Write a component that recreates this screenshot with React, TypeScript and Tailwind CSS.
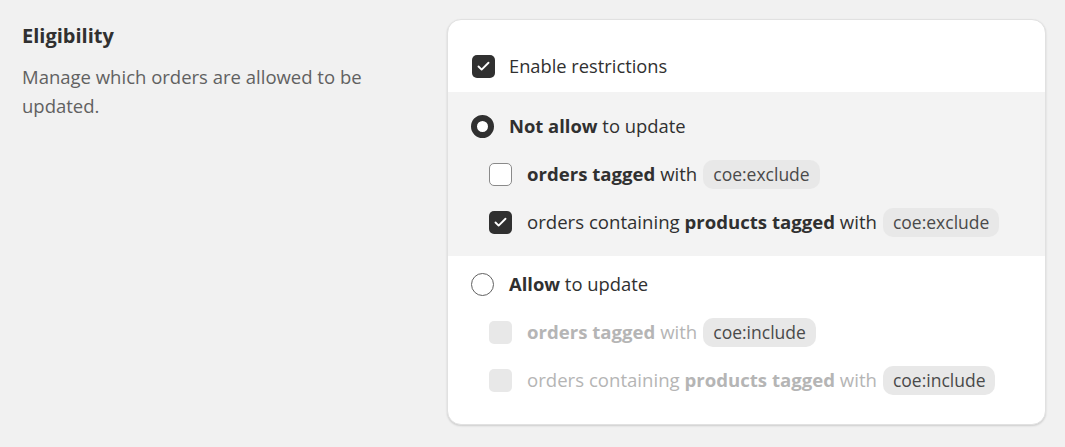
import { Check } from "lucide-react";

function Tag({ label }: { label: string }) {
  return (
    <span className="ml-[6px] inline-flex h-[29px] items-center rounded-[10px] bg-[#e8e8e8] px-[10px] text-[17.5px] font-normal text-[#4a4a4a]">
      {label}
    </span>
  );
}

function Box({ state }: { state: "on" | "off" | "disabled" }) {
  if (state === "on")
    return (
      <span className="flex h-[23px] w-[23px] shrink-0 items-center justify-center rounded-[5px] bg-[#303030]">
        <Check size={15} strokeWidth={3} className="text-white" />
      </span>
    );
  if (state === "disabled")
    return <span className="h-[23px] w-[23px] shrink-0 rounded-[5px] bg-[#e8e8e8]" />;
  return <span className="h-[23px] w-[23px] shrink-0 rounded-[5px] border border-[#8a8a8a] bg-white" />;
}

function Radio({ on }: { on: boolean }) {
  return on ? (
    <span className="h-[23px] w-[23px] shrink-0 rounded-full border-[6px] border-[#303030] bg-white" />
  ) : (
    <span className="h-[23px] w-[23px] shrink-0 rounded-full border border-[#616161] bg-white" />
  );
}

function App() {
  return (
    <div
      className="flex min-h-[447px] bg-[#f1f1f1] text-[#303030]"
      style={{ fontFamily: '"Open Sans", "Noto Sans", sans-serif' }}
    >
      <div className="w-[447px] shrink-0 pl-[22px] pt-[22px] pr-[60px]">
        <h2 className="text-[20px] font-bold leading-[28px]">Eligibility</h2>
        <p className="mt-[12px] text-[18.5px] leading-[29px] text-[#616161]">
          Manage which orders are allowed to be updated.
        </p>
      </div>

      <div className="mt-[19px] mb-[22px] h-[406px] w-[599px] overflow-hidden rounded-[14px] border border-[#e1e1e1] bg-white shadow-[0_1px_2px_rgba(0,0,0,0.15)]">
        <div className="flex h-[72px] items-center gap-[14px] px-[24px] pt-[20px]">
          <Box state="on" />
          <span className="text-[18.3px]">Enable restrictions</span>
        </div>

        <div className="flex flex-col bg-[#f3f3f3] px-[23px] pt-[10px] pb-[10px]">
          <div className="flex h-[48px] items-center gap-[15px]">
            <Radio on />
            <span className="text-[18.4px]">
              <b>Not allow</b> to update
            </span>
          </div>
          <div className="flex h-[48px] items-center gap-[15px] pl-[18px]">
            <Box state="off" />
            <span className="flex items-center text-[18.6px]">
              <b>orders tagged</b>&nbsp;with
              <Tag label="coe:exclude" />
            </span>
          </div>
          <div className="flex h-[48px] items-center gap-[15px] pl-[18px]">
            <Box state="on" />
            <span className="flex items-center text-[18.6px]">
              orders containing&nbsp;<b>products tagged</b>&nbsp;with
              <Tag label="coe:exclude" />
            </span>
          </div>
        </div>

        <div className="flex flex-col px-[23px] pt-[4px] pb-[20px]">
          <div className="flex h-[48px] items-center gap-[15px]">
            <Radio on={false} />
            <span className="text-[18.4px]">
              <b>Allow</b> to update
            </span>
          </div>
          <div className="flex h-[48px] items-center gap-[15px] pl-[18px] text-[#b5b5b5]">
            <Box state="disabled" />
            <span className="flex items-center text-[18.6px]">
              <b>orders tagged</b>&nbsp;with
              <Tag label="coe:include" />
            </span>
          </div>
          <div className="flex h-[48px] items-center gap-[15px] pl-[18px] text-[#b5b5b5]">
            <Box state="disabled" />
            <span className="flex items-center text-[18.6px]">
              orders containing&nbsp;<b>products tagged</b>&nbsp;with
              <Tag label="coe:include" />
            </span>
          </div>
        </div>
      </div>
    </div>
  );
}

export default App;
